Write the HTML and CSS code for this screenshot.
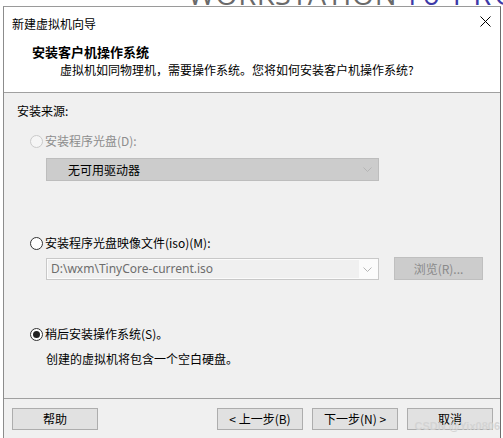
FILE: index.html
```html
<!DOCTYPE html>
<html lang="zh-CN">
<head>
    <meta charset="UTF-8">
    <title>新建虚拟机向导</title>
    <link rel="stylesheet" href="styles.css">
</head>
<body>
    <div class="backdrop">
        <div class="brand">WORKSTATION<span class="brand-ver">16 PRO</span></div>
    </div>
    <div class="window">
        <div class="titlebar">
            <span class="title">新建虚拟机向导</span>
            <svg class="close" width="11" height="11" viewBox="0 0 11 11">
                <path d="M0.5 0.5 L10.5 10.5 M10.5 0.5 L0.5 10.5" stroke="#000" stroke-width="1" fill="none"/>
            </svg>
        </div>
        <div class="header">
            <div class="header-title">安装客户机操作系统</div>
            <div class="header-sub">虚拟机如同物理机，需要操作系统。您将如何安装客户机操作系统?</div>
        </div>
        <div class="content">
            <div class="section-label">安装来源:</div>

            <div class="radio-row disabled row-disc">
                <span class="radio"></span>
                <span>安装程序光盘(D):</span>
            </div>
            <div class="select-box">
                <span class="select-text">无可用驱动器</span>
                <svg class="chevron" width="9" height="5" viewBox="0 0 9 5">
                    <path d="M0.5 0.5 L4.5 4.5 L8.5 0.5" stroke="#b5b5b5" fill="none"/>
                </svg>
            </div>

            <div class="radio-row row-iso">
                <span class="radio"></span>
                <span>安装程序光盘映像文件(iso)(M):</span>
            </div>
            <div class="iso-row">
                <div class="combo">
                    <span class="combo-field">D:\wxm\TinyCore-current.iso</span>
                    <svg class="chevron" width="9" height="5" viewBox="0 0 9 5">
                        <path d="M0.5 0.5 L4.5 4.5 L8.5 0.5" stroke="#b5b5b5" fill="none"/>
                    </svg>
                </div>
                <div class="browse">浏览(R)...</div>
            </div>

            <div class="radio-row row-later">
                <span class="radio checked"></span>
                <span>稍后安装操作系统(S)。</span>
            </div>
            <div class="note">创建的虚拟机将包含一个空白硬盘。</div>
        </div>
        <div class="footer">
            <button class="btn">帮助</button>
            <div class="footer-right">
                <button class="btn">&lt; 上一步(B)</button>
                <button class="btn">下一步(N) &gt;</button>
                <button class="btn">取消</button>
            </div>
        </div>
    </div>
    <div class="watermark">CSDN @Yix0806</div>
</body>
</html>
```

FILE: styles.css
```css
html, body {
  margin: 0;
  height: 100%;
  overflow: hidden;
}

body {
  background-color: #fff;
  font-family: "Noto Sans CJK SC", "Noto Sans", sans-serif;
  font-size: 12px;
  color: #000;
  position: relative;
}

* {
  box-sizing: border-box;
}

.backdrop {
  height: 6px;
  overflow: hidden;
  padding-left: 188px;
}

.brand {
  font-family: "Open Sans", sans-serif;
  font-weight: 400;
  font-size: 29px;
  line-height: 30px;
  letter-spacing: 0.5px;
  color: #6a6a6a;
  margin-top: -21px;
  white-space: nowrap;
}

.brand-ver {
  color: #3d3aa8;
  margin-left: 6px;
  letter-spacing: 3px;
}

.window {
  margin-left: 3px;
  width: 498px;
  height: 432px;
  border-top: 1px solid #9a9a9a;
  border-left: 1px solid #8c8c8c;
  border-right: 1px solid #6e6e6e;
  display: flex;
  flex-direction: column;
}

.titlebar {
  height: 31px;
  flex: none;
  display: flex;
  align-items: center;
  justify-content: space-between;
  padding: 0 9px 0 8px;
  background-color: #fff;
}

.title {
  line-height: 31px;
  padding-top: 1px;
}

.close {
  margin-top: -2px;
}

.header {
  height: 55px;
  flex: none;
  padding: 5px 0 0 28px;
  background-color: #fff;
  border-bottom: 1px solid #a0a0a0;
}

.header-title {
  font-weight: bold;
  font-size: 13px;
  line-height: 18px;
}

.header-sub {
  line-height: 18px;
  padding-left: 28px;
}

.content {
  flex: 1;
  background-color: #f0f0f0;
  padding: 9px 0 0 13px;
  border-bottom: 1px solid #a0a0a0;
}

.section-label {
  line-height: 18px;
}

.radio-row {
  display: flex;
  align-items: center;
  gap: 2px;
  line-height: 18px;
  margin-left: 13px;
}

.radio-row.disabled {
  color: #8d8d8d;
}

.row-disc {
  margin-top: 12px;
}

.row-iso {
  margin-top: 53px;
}

.row-later {
  margin-top: 45px;
}

.radio {
  width: 13px;
  height: 13px;
  border: 1px solid #333;
  border-radius: 50%;
  background-color: #fff;
  display: flex;
  align-items: center;
  justify-content: center;
}

.disabled .radio {
  border-color: #cacaca;
  background-color: #f5f5f5;
}

.radio.checked::after {
  content: "";
  width: 7px;
  height: 7px;
  border-radius: 50%;
  background-color: #222;
}

.select-box {
  margin: 8px 0 0 29px;
  width: 333px;
  height: 23px;
  background-color: #cccccc;
  border: 1px solid #bdbdbd;
  display: flex;
  align-items: center;
  justify-content: space-between;
  padding: 0 6px 0 21px;
}

.select-text {
  line-height: 21px;
}

.iso-row {
  display: flex;
  align-items: flex-start;
  margin: 5px 0 0 29px;
  gap: 15px;
}

.combo {
  margin-top: 1px;
  width: 333px;
  height: 22px;
  border: 1px solid #c8c8c8;
  background-color: #fbfbfb;
  display: flex;
  align-items: center;
  justify-content: space-between;
  padding: 0 6px 0 1px;
}

.combo-field {
  width: 311px;
  height: 18px;
  line-height: 18px;
  padding-left: 3px;
  background-color: #f0f0f0;
  color: #6d6d6d;
  font-family: "Noto Sans", "Noto Sans CJK SC", sans-serif;
  font-size: 12px;
}

.browse {
  width: 89px;
  height: 23px;
  line-height: 21px;
  text-align: center;
  background-color: #cccccc;
  border: 1px solid #bfbfbf;
  color: #8a8a8a;
}

.note {
  margin: 7px 0 0 29px;
  line-height: 18px;
}

.footer {
  height: 39px;
  flex: none;
  background-color: #f0f0f0;
  display: flex;
  justify-content: space-between;
  padding: 9px 7px 0 8px;
  align-items: flex-start;
}

.footer-right {
  display: flex;
  gap: 9px;
}

.btn {
  width: 86px;
  height: 22px;
  padding: 0;
  font-family: "Noto Sans CJK SC", "Noto Sans", sans-serif;
  font-size: 12px;
  color: #000;
  background-color: #e1e1e1;
  border: 1px solid #adadad;
  border-radius: 0;
  line-height: 20px;
}

.watermark {
  position: absolute;
  right: 3px;
  bottom: 6px;
  font-family: "Liberation Sans", sans-serif;
  font-weight: bold;
  font-size: 11px;
  color: rgba(210, 210, 210, 0.9);
}
```
